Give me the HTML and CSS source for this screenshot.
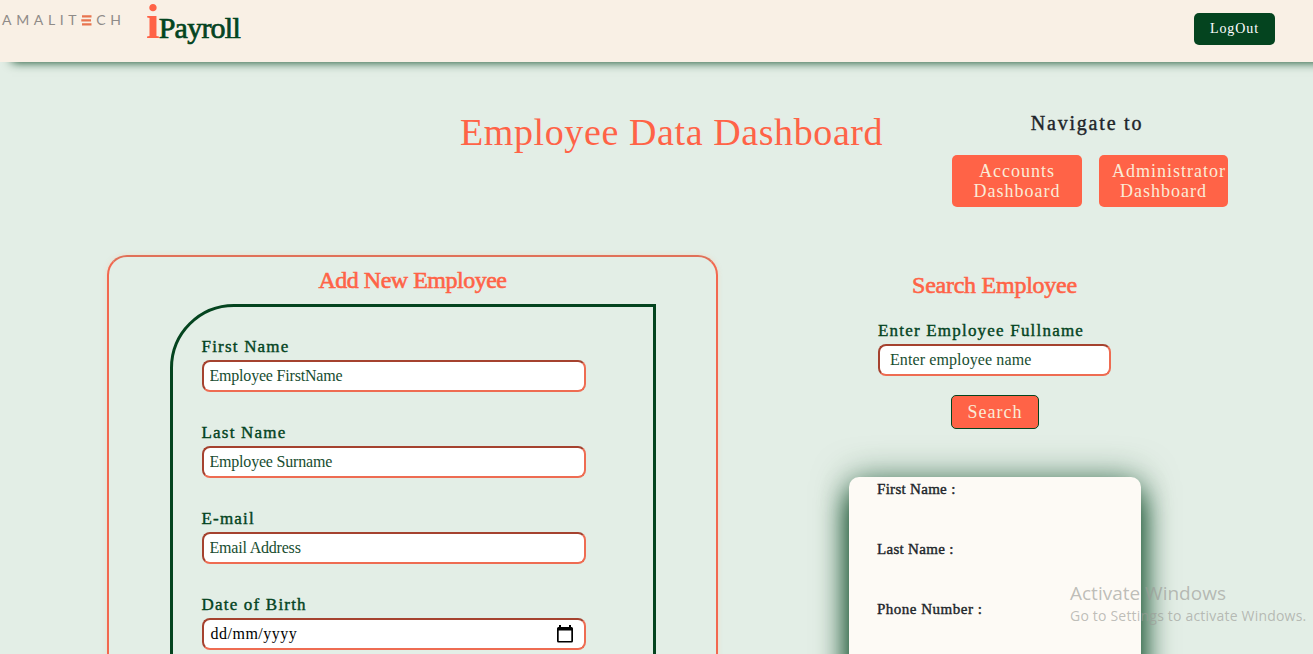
FILE: index.html
```html
<!DOCTYPE html>
<html lang="en">
<head>
<meta charset="utf-8">
<title>iPayroll</title>
<link rel="stylesheet" href="styles.css">
</head>
<body>
<nav class="navbar">
  <div class="company">AMALIT<svg class="bars" width="11" height="11" viewBox="0 0 11 11"><path d="M1 .2h9.500v2.300H1zM.3 4.200h9.700v2.300H.3zM1 8.200h9.500v2.300H1z" fill="#e8744f"/></svg>CH</div>
  <div class="brand"><span class="brand-i">i</span><span class="brand-name">Payroll</span></div>
  <button class="logout">LogOut</button>
</nav>
<header class="top">
  <h1 class="title">Employee Data Dashboard</h1>
  <div class="navigate">
    <h2 class="navigate-title">Navigate to</h2>
    <div class="links">
      <a class="link"><span>Accounts</span><span>Dashboard</span></a>
      <a class="link"><span class="wide">Administrator</span><span>Dashboard</span></a>
    </div>
  </div>
</header>
<main class="content">
  <section class="add">
    <h3 class="heading add-heading">Add New Employee</h3>
    <form class="form">
      <label class="label">First Name</label>
      <input class="field" placeholder="Employee FirstName">
      <label class="label">Last Name</label>
      <input class="field" placeholder="Employee Surname">
      <label class="label">E-mail</label>
      <input class="field" placeholder="Email Address">
      <label class="label">Date of Birth</label>
      <div class="field date"><span>dd/mm/yyyy</span><svg width="18" height="18" viewBox="0 0 18 18"><path d="M3 0h2v2h8V0h2v2h.5Q17 2 17 3.500v12.500q0 1.500-1.500 1.500h-13Q1 17.500 1 16V3.500Q1 2 2.500 2H3zM2.700 5.500V16h12.600V5.500z" fill="#000" fill-rule="evenodd"/></svg></div>
    </form>
  </section>
  <aside class="side">
    <h3 class="heading search-heading">Search Employee</h3>
    <div class="search">
      <label class="label search-label">Enter Employee Fullname</label>
      <input class="field search-field" placeholder="Enter employee name">
      <button class="search-button">Search</button>
    </div>
    <div class="result">
      <p class="row">First Name :</p>
      <p class="row">Last Name :</p>
      <p class="row">Phone Number :</p>
    </div>
  </aside>
</main>
<div class="watermark">
  <div class="watermark-title">Activate Windows</div>
  <div class="watermark-text">Go to Settings to activate Windows.</div>
</div>
</body>
</html>
```
FILE: styles.css
```css
* { box-sizing: border-box; }
body {
  margin: 0;
  height: 654px;
  overflow: hidden;
  background: #e3eee6;
  font-family: "Liberation Serif", serif;
  color: #212529;
}
h1, h2, h3, p { margin: 0; font-weight: 400; }
button, input { font-family: inherit; }

.navbar {
  height: 62px;
  display: flex;
  align-items: flex-start;
  background: #f9f0e5;
  box-shadow: 12px 0 10px #04441f;
}
.company {
  width: 146px;
  padding: 13px 0 0 2px;
  font: 400 14px/14px Lato, sans-serif;
  letter-spacing: 4.650px;
  color: #8f8b88;
  white-space: nowrap;
}
.bars { margin-right: 4px; vertical-align: -0.500px; }
.brand { display: flex; height: 62px; align-items: flex-start; color: #04441f; }
.brand-i { margin-right: -1px; font-size: 49px; line-height: 56px; font-weight: 700; color: #ff6347; margin-top: -6px; }
.brand-name { font-size: 30px; line-height: 36px; margin-top: 10px; letter-spacing: -0.750px; -webkit-text-stroke: 0.700px #04441f; }
.logout {
  width: 81px;
  height: 32px;
  margin: 13px 38px 0 auto;
  padding: 0;
  border: 0;
  border-radius: 5px;
  background: #04441f;
  color: #fff;
  font-size: 14px;
  letter-spacing: 0.900px;
}

.top { display: flex; height: 185px; }
.title { width: 492px; margin-left: 460px; padding-top: 47px; font-size: 38px; line-height: 46px; letter-spacing: 0.600px; color: #ff6347; white-space: nowrap; }
.navigate { width: 276px; padding-top: 49px; }
.navigate-title { padding-right: 6px; font-size: 20px; line-height: 24px; letter-spacing: 1.800px; text-align: center; -webkit-text-stroke: 0.400px #212529; }
.links { display: flex; justify-content: space-between; margin-top: 20px; }
.link { display: flex; flex-direction: column; align-items: center; width: 130px; height: 52px; padding-top: 6px; border-radius: 5px; background: #ff6347; color: #faebd7; font-size: 18px; line-height: 20px; letter-spacing: 1px; }
.link + .link { width: 129px; }
.link .wide { align-self: flex-end; margin-right: 2px; }

.content { display: flex; align-items: flex-start; height: 407px; overflow: hidden; padding: 8px 0 0 107px; }
.add {
  width: 611px;
  height: 700px;
  display: flex;
  flex-direction: column;
  align-items: center;
  border: 2px solid #f2684f;
  border-top-color: #e07058;
  border-radius: 20px;
  box-shadow: 0 0 4px rgba(250, 200, 170, 0.500);
}
.heading { font-size: 24px; line-height: 30px; color: #ff6347; -webkit-text-stroke: 0.600px #ff6347; }
.add-heading { padding-top: 8px; letter-spacing: -0.500px; }
.form { width: 486px; height: 640px; margin-top: 9px; padding: 30px 29px 0; border: 3px solid #04441f; border-radius: 64px 0 0 0; }
.label { display: block; height: 23px; font-size: 17px; line-height: 20px; letter-spacing: 1.200px; color: #04441f; -webkit-text-stroke: 0.400px #04441f; }
.field {
  display: block;
  width: 384px;
  height: 32px;
  margin-bottom: 31px;
  padding: 0 6px;
  border: 2px solid #ee6c52;
  border-top-color: #a5422f;
  border-left-color: #a5422f;
  border-radius: 8px;
  background: #fff;
  font-size: 16px;
  letter-spacing: -0.200px;
  outline: 0;
}
.field::placeholder { color: #174d30; opacity: 1; }
.date { display: flex; align-items: center; justify-content: space-between; padding: 0 10px 0 7px; letter-spacing: 0.500px; color: #000; }

.side { width: 292px; margin-left: 131px; display: flex; flex-direction: column; align-items: center; }
.search-heading { padding: 15px 1px 0 0; letter-spacing: -0.250px; }
.search { width: 234px; display: flex; flex-direction: column; align-items: flex-start; margin-top: 21px; }
.search-label { letter-spacing: 1.200px; white-space: nowrap; }
.search-field { width: 233px; margin-bottom: 19px; padding: 0 10px; letter-spacing: 0.100px; }
.search-button { align-self: center; width: 88px; height: 34px; padding: 0; border: 1px solid #04441f; border-radius: 5px; background: #ff6347; color: #faebd7; font-size: 18px; letter-spacing: 1px; }
.result {
  width: 292px;
  height: 300px;
  margin-top: 48px;
  padding: 1px 28px;
  border-radius: 10px;
  background: #fdfaf5;
  box-shadow: 0 17px 28px #04441f, 0 0 35px rgba(4, 68, 31, 0.550);
}
.row { height: 60px; font-size: 15px; line-height: 22px; letter-spacing: 0.300px; -webkit-text-stroke: 0.400px #212529; }
.row:last-child { letter-spacing: 0.500px; }

.watermark { position: absolute; left: 1070px; top: 581px; color: rgba(155, 155, 150, 0.650); font-family: "Open Sans", sans-serif; white-space: nowrap; }
.watermark-title { font-size: 19px; line-height: 25px; }
.watermark-text { font-size: 14px; line-height: 20px; letter-spacing: 0.200px; }
```
